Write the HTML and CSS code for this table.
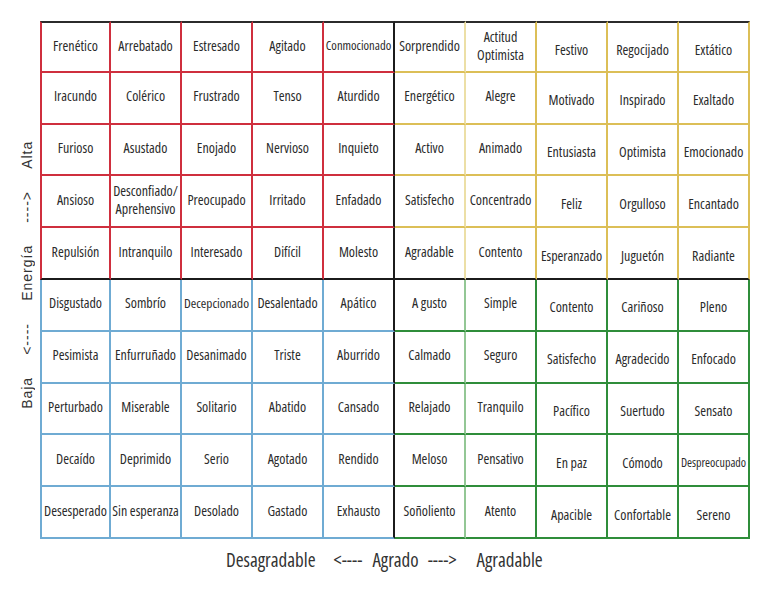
FILE: index.html
```html
<!DOCTYPE html>
<html lang="es">
<head>
<meta charset="utf-8">
<title>Medidor de emociones</title>
<link rel="stylesheet" href="styles.css">
</head>
<body>
<div class="page">
  <div class="main">
    <div class="ylabel">
      <div class="ytext"><span>Baja</span><span>&lt;----</span><span>Energía</span><span>----&gt;</span><span>Alta</span></div>
    </div>
    <div class="grid">
      <div class="c r">Frenético</div><div class="c r">Arrebatado</div><div class="c r">Estresado</div><div class="c r">Agitado</div><div class="c r sm">Conmocionado</div>
      <div class="c y">Sorprendido</div><div class="c y two">Actitud<br>Optimista</div><div class="c y">Festivo</div><div class="c y">Regocijado</div><div class="c y">Extático</div>

      <div class="c r">Iracundo</div><div class="c r">Colérico</div><div class="c r">Frustrado</div><div class="c r">Tenso</div><div class="c r">Aturdido</div>
      <div class="c y">Energético</div><div class="c y">Alegre</div><div class="c y">Motivado</div><div class="c y">Inspirado</div><div class="c y">Exaltado</div>

      <div class="c r">Furioso</div><div class="c r">Asustado</div><div class="c r">Enojado</div><div class="c r">Nervioso</div><div class="c r">Inquieto</div>
      <div class="c y">Activo</div><div class="c y">Animado</div><div class="c y">Entusiasta</div><div class="c y">Optimista</div><div class="c y">Emocionado</div>

      <div class="c r">Ansioso</div><div class="c r two">Desconfiado/<br>Aprehensivo</div><div class="c r">Preocupado</div><div class="c r">Irritado</div><div class="c r">Enfadado</div>
      <div class="c y">Satisfecho</div><div class="c y">Concentrado</div><div class="c y">Feliz</div><div class="c y">Orgulloso</div><div class="c y">Encantado</div>

      <div class="c r">Repulsión</div><div class="c r">Intranquilo</div><div class="c r">Interesado</div><div class="c r">Difícil</div><div class="c r">Molesto</div>
      <div class="c y">Agradable</div><div class="c y">Contento</div><div class="c y">Esperanzado</div><div class="c y">Juguetón</div><div class="c y">Radiante</div>

      <div class="c b">Disgustado</div><div class="c b">Sombrío</div><div class="c b md">Decepcionado</div><div class="c b">Desalentado</div><div class="c b">Apático</div>
      <div class="c g">A gusto</div><div class="c g">Simple</div><div class="c g">Contento</div><div class="c g">Cariñoso</div><div class="c g">Pleno</div>

      <div class="c b">Pesimista</div><div class="c b">Enfurruñado</div><div class="c b">Desanimado</div><div class="c b">Triste</div><div class="c b">Aburrido</div>
      <div class="c g">Calmado</div><div class="c g">Seguro</div><div class="c g">Satisfecho</div><div class="c g">Agradecido</div><div class="c g">Enfocado</div>

      <div class="c b">Perturbado</div><div class="c b">Miserable</div><div class="c b">Solitario</div><div class="c b">Abatido</div><div class="c b">Cansado</div>
      <div class="c g">Relajado</div><div class="c g">Tranquilo</div><div class="c g">Pacífico</div><div class="c g">Suertudo</div><div class="c g">Sensato</div>

      <div class="c b">Decaído</div><div class="c b">Deprimido</div><div class="c b">Serio</div><div class="c b">Agotado</div><div class="c b">Rendido</div>
      <div class="c g">Meloso</div><div class="c g">Pensativo</div><div class="c g">En paz</div><div class="c g">Cómodo</div><div class="c g xs">Despreocupado</div>

      <div class="c b">Desesperado</div><div class="c b">Sin esperanza</div><div class="c b">Desolado</div><div class="c b">Gastado</div><div class="c b">Exhausto</div>
      <div class="c g">Soñoliento</div><div class="c g">Atento</div><div class="c g">Apacible</div><div class="c g">Confortable</div><div class="c g">Sereno</div>
    </div>
  </div>
  <div class="xlabel">
    <span class="x1">Desagradable</span><span class="x2">&lt;----</span><span class="x3">Agrado</span><span class="x4">----&gt;</span><span class="x5">Agradable</span>
  </div>
</div>
</body>
</html>
```

FILE: styles.css
```css
* { box-sizing: border-box; }

html, body {
  margin: 0;
  padding: 0;
  background: #ffffff;
}

body {
  width: 768px;
  height: 594px;
  overflow: hidden;
  font-family: "Open Sans", "DejaVu Sans Condensed", sans-serif;
  font-stretch: 80%;
  color: #2b2b2b;
}

.page {
  padding-top: 21px;
  display: flex;
  flex-direction: column;
}

.main {
  display: flex;
}

.ylabel {
  width: 40px;
  flex: none;
  display: flex;
  align-items: center;
  justify-content: center;
  padding-left: 14px;
}

.ytext {
  writing-mode: vertical-rl;
  transform: rotate(180deg);
  display: flex;
  gap: 22px;
  font-family: "Liberation Sans", "DejaVu Sans", sans-serif;
  font-stretch: 100%;
  font-size: 14px;
  letter-spacing: 1px;
  color: #333;
  white-space: nowrap;
  margin-top: -10px;
}

.grid {
  width: 710px;
  height: 518px;
  flex: none;
  display: grid;
  grid-template-columns: repeat(10, minmax(0, 1fr));
  grid-template-rows: repeat(10, minmax(0, 1fr));
}

.c {
  min-width: 0;
  display: flex;
  align-items: center;
  justify-content: center;
  text-align: center;
  font-size: 14px;
  line-height: 1.2;
  white-space: nowrap;
  border-right: 2px solid;
  border-bottom: 2px solid;
  background: #fff;
  padding-bottom: 2px;
}

.c.two { line-height: 1.3; }

.c.r { border-color: #cf2f3e; }
.c.y { border-color: #dcbf57; }
.c.b { border-color: #6fabd3; }
.c.g { border-color: #2f8d3a; }

/* outer edges */
.grid > .c:nth-child(10n+1) { border-left: 2px solid #cf2f3e; }
.grid > .c.b:nth-child(10n+1) { border-left-color: #6fabd3; }
.grid > .c:nth-child(-n+10) { border-top: 2px solid; }

/* light inner vertical between columns 6 and 7 */
.grid > .c.y:nth-child(10n+6) { border-right-color: #ecdfa6; }
.grid > .c.g:nth-child(10n+6) { border-right-color: #93c795; }

/* black quadrant dividers */
.grid > .c:nth-child(10n+5) { border-right-color: #1b1b1b; }
.grid > .c:nth-child(n+41):nth-child(-n+50) { border-bottom-color: #1b1b1b; }

/* right block text sits a little lower */
.grid > .c:nth-child(10n+8),
.grid > .c:nth-child(10n+9),
.grid > .c:nth-child(10n) {
  padding-top: 6px;
  padding-bottom: 0;
}

.c.md { font-size: 13.3px; }
.c.sm { font-size: 12.6px; }
.c.xs { font-size: 12px; }

.xlabel {
  display: flex;
  padding-left: 226px;
  margin-top: 10px;
  font-size: 19px;
  line-height: 22px;
  color: #333;
  white-space: nowrap;
}

.x2 { margin-left: 18px; }
.x3 { margin-left: 10px; }
.x4 { margin-left: 9px; }
.x5 { margin-left: 20px; }
```
